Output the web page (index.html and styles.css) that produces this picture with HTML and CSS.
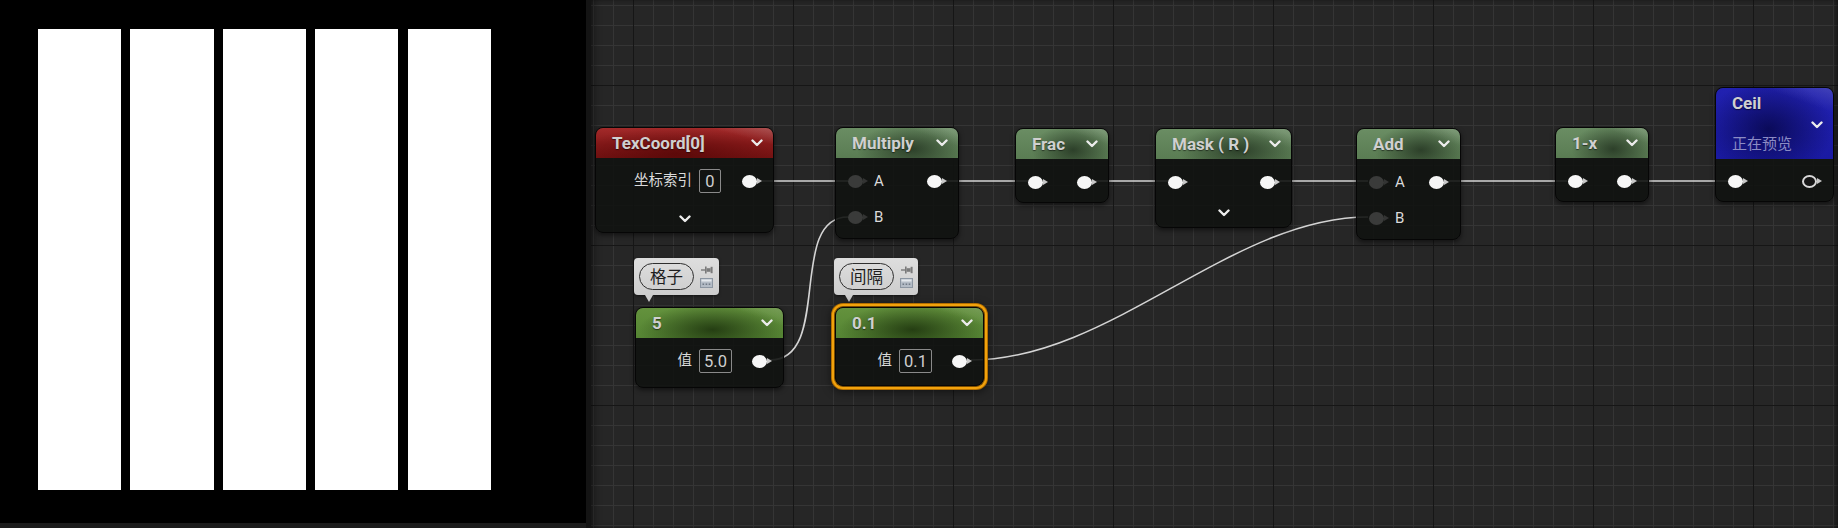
FILE: index.html
```html
<!DOCTYPE html>
<html lang="zh">
<head>
<meta charset="utf-8">
<title>Material Graph</title>
<link rel="stylesheet" href="styles.css">
</head>
<body>
<div class="app">
  <div class="preview-col">
    <div class="preview">
      <div class="stripes">
        <div class="bar"></div><div class="bar"></div><div class="bar"></div><div class="bar"></div><div class="bar"></div>
      </div>
    </div>
    <div class="preview-foot"></div>
  </div>
  <div class="divider"></div>
  <div class="graph">
    <svg class="wires" width="1247" height="528" viewBox="0 0 1247 528">
      <g stroke="#d4d4d4" stroke-width="1.6" fill="none">
        <line x1="168" y1="181" x2="257" y2="181"/>
        <line x1="354" y1="181" x2="438" y2="181"/>
        <line x1="504" y1="181" x2="577" y2="181"/>
        <line x1="689" y1="181" x2="777" y2="181"/>
        <line x1="858" y1="181" x2="976" y2="181"/>
        <line x1="1045" y1="181" x2="1137" y2="181"/>
        <path d="M179 360 C 242 360, 196 217, 257 217"/>
        <path d="M380 360 C 520 360, 640 217, 777 217"/>
      </g>
    </svg>

    <!-- TexCoord -->
    <div class="node n-tex">
      <div class="hdr hdr-red"><span class="title">TexCoord[0]</span><svg class="chev" width="12" height="8" viewBox="0 0 12 8"><polyline points="1.5,1.5 6,6 10.5,1.5"/></svg></div>
      <div class="body">
        <div class="row row-end"><span class="lbl">坐标索引</span><span class="box">0</span><span class="pin out gap-l"></span></div>
        <div class="row-chev tall"><svg class="chev" width="12" height="8" viewBox="0 0 12 8"><polyline points="1.5,1.5 6,6 10.5,1.5"/></svg></div>
      </div>
    </div>

    <!-- Multiply -->
    <div class="node n-mul">
      <div class="hdr hdr-green"><span class="title">Multiply</span><svg class="chev" width="12" height="8" viewBox="0 0 12 8"><polyline points="1.5,1.5 6,6 10.5,1.5"/></svg></div>
      <div class="body pb3">
        <div class="row"><span class="in"><span class="pin dark"></span><span class="lbl">A</span></span><span class="pin out"></span></div>
        <div class="row"><span class="in"><span class="pin dark"></span><span class="lbl">B</span></span></div>
      </div>
    </div>

    <!-- Frac -->
    <div class="node n-frac">
      <div class="hdr hdr-green"><span class="title">Frac</span><svg class="chev" width="12" height="8" viewBox="0 0 12 8"><polyline points="1.5,1.5 6,6 10.5,1.5"/></svg></div>
      <div class="body">
        <div class="row"><span class="pin out"></span><span class="pin out"></span></div>
      </div>
    </div>

    <!-- Mask -->
    <div class="node n-mask">
      <div class="hdr hdr-green"><span class="title">Mask ( R )</span><svg class="chev" width="12" height="8" viewBox="0 0 12 8"><polyline points="1.5,1.5 6,6 10.5,1.5"/></svg></div>
      <div class="body">
        <div class="row"><span class="pin out"></span><span class="pin out"></span></div>
        <div class="row-chev"><svg class="chev" width="12" height="8" viewBox="0 0 12 8"><polyline points="1.5,1.5 6,6 10.5,1.5"/></svg></div>
      </div>
    </div>

    <!-- Add -->
    <div class="node n-add">
      <div class="hdr hdr-green"><span class="title">Add</span><svg class="chev" width="12" height="8" viewBox="0 0 12 8"><polyline points="1.5,1.5 6,6 10.5,1.5"/></svg></div>
      <div class="body pb3">
        <div class="row"><span class="in"><span class="pin dark"></span><span class="lbl">A</span></span><span class="pin out"></span></div>
        <div class="row"><span class="in"><span class="pin dark"></span><span class="lbl">B</span></span></div>
      </div>
    </div>

    <!-- 1-x -->
    <div class="node n-onex">
      <div class="hdr hdr-green"><span class="title">1-x</span><svg class="chev" width="12" height="8" viewBox="0 0 12 8"><polyline points="1.5,1.5 6,6 10.5,1.5"/></svg></div>
      <div class="body">
        <div class="row"><span class="pin out"></span><span class="pin out"></span></div>
      </div>
    </div>

    <!-- Ceil -->
    <div class="node n-ceil">
      <div class="hdr-blue">
        <span class="title">Ceil</span>
        <svg class="chev chev-r" width="12" height="8" viewBox="0 0 12 8"><polyline points="1.5,1.5 6,6 10.5,1.5"/></svg>
        <span class="sub">正在预览</span>
      </div>
      <div class="body pt4">
        <div class="row"><span class="pin out"></span><span class="pin ring"></span></div>
      </div>
    </div>

    <!-- Comments -->
    <div class="comment c-grid">
      <span class="pill">格子</span>
      <span class="cicons">
        <svg width="12" height="8" viewBox="0 0 12 8"><g fill="#7a7a7a"><rect x="0" y="3.3" width="4" height="1.4"/><rect x="4" y="0.5" width="1.6" height="7"/><rect x="5.6" y="2.2" width="4" height="3.6"/><rect x="9.6" y="0.8" width="2" height="6.4"/></g></svg>
        <svg width="13" height="10" viewBox="0 0 13 10"><rect x="0.5" y="0.5" width="12" height="9" fill="#b4bcc6" stroke="#8c96a2"/><rect x="1.5" y="1.5" width="10" height="2" fill="#e4e8ec"/><g fill="#6a7480"><rect x="2.5" y="5.5" width="1.6" height="1.4"/><rect x="5.6" y="5.5" width="1.6" height="1.4"/><rect x="8.7" y="5.5" width="1.6" height="1.4"/></g></svg>
      </span>
    </div>
    <div class="comment c-gap">
      <span class="pill">间隔</span>
      <span class="cicons">
        <svg width="12" height="8" viewBox="0 0 12 8"><g fill="#7a7a7a"><rect x="0" y="3.3" width="4" height="1.4"/><rect x="4" y="0.5" width="1.6" height="7"/><rect x="5.6" y="2.2" width="4" height="3.6"/><rect x="9.6" y="0.8" width="2" height="6.4"/></g></svg>
        <svg width="13" height="10" viewBox="0 0 13 10"><rect x="0.5" y="0.5" width="12" height="9" fill="#b4bcc6" stroke="#8c96a2"/><rect x="1.5" y="1.5" width="10" height="2" fill="#e4e8ec"/><g fill="#6a7480"><rect x="2.5" y="5.5" width="1.6" height="1.4"/><rect x="5.6" y="5.5" width="1.6" height="1.4"/><rect x="8.7" y="5.5" width="1.6" height="1.4"/></g></svg>
      </span>
    </div>

    <!-- Constant 5 -->
    <div class="node n-c5">
      <div class="hdr hdr-const"><span class="title">5</span><svg class="chev" width="12" height="8" viewBox="0 0 12 8"><polyline points="1.5,1.5 6,6 10.5,1.5"/></svg></div>
      <div class="body pb8">
        <div class="row row-end"><span class="lbl">值</span><span class="box">5.0</span><span class="pin out gap-l2"></span></div>
      </div>
    </div>

    <!-- Constant 0.1 (selected) -->
    <div class="node n-c01 selected">
      <div class="hdr hdr-const"><span class="title">0.1</span><svg class="chev" width="12" height="8" viewBox="0 0 12 8"><polyline points="1.5,1.5 6,6 10.5,1.5"/></svg></div>
      <div class="body pb6">
        <div class="row row-end"><span class="lbl">值</span><span class="box">0.1</span><span class="pin out gap-l2"></span></div>
      </div>
    </div>
  </div>
</div>
</body>
</html>
```

FILE: styles.css
```css
* { box-sizing: border-box; }
html, body { margin: 0; padding: 0; }
body {
  width: 1838px;
  height: 528px;
  overflow: hidden;
  background: #1b1b1b;
  font-family: Roboto, "Noto Sans CJK SC", "DejaVu Sans", sans-serif;
}
.app { display: flex; width: 1838px; height: 528px; }

/* ---------- preview ---------- */
.preview-col { width: 586px; display: flex; flex-direction: column; }
.preview { height: 523px; background: #000; padding: 29px 0 0 38px; }
.preview-foot { flex: 1; background: #1c1c1c; }
.stripes { display: grid; grid-template-columns: repeat(5, 83.2px); column-gap: 9.2px; height: 461px; }
.bar { background: #fff; }
.divider { width: 5px; background: #141414; }

/* ---------- graph ---------- */
.graph {
  flex: 1;
  position: relative;
  overflow: hidden;
  background-color: #262626;
  background-image:
    linear-gradient(to right, #161616 0 1.5px, transparent 1.5px),
    linear-gradient(to bottom, #161616 0 1.5px, transparent 1.5px),
    linear-gradient(to right, #353535 0 1px, transparent 1px),
    linear-gradient(to bottom, #353535 0 1px, transparent 1px);
  background-size: 160px 100%, 100% 160px, 20px 100%, 100% 20px;
  background-position: 42px 0, 0 85px, 2px 0, 0 5px;
  box-shadow: inset 6px 0 8px -4px rgba(0,0,0,0.55), inset -4px 0 5px -2px rgba(0,0,0,0.5);
}
.wires { position: absolute; left: 0; top: 0; }

/* ---------- nodes ---------- */
.node {
  position: absolute;
  border: 1px solid #060606;
  border-radius: 8px;
  background: rgba(17, 19, 17, 0.9);
  box-shadow: 0 2px 5px rgba(0,0,0,0.55);
  overflow: hidden;
  color: #dcdcdc;
}
.hdr {
  height: 30px;
  display: flex;
  align-items: center;
  justify-content: space-between;
  padding: 0 10px 0 16px;
}
.title {
  font-size: 17px;
  font-weight: 700;
  color: #d0d0d0;
  text-shadow: 0 1px 1px rgba(0,0,0,0.5);
  line-height: 1;
}
.chev polyline { fill: none; stroke: #ececec; stroke-width: 2.4; stroke-linecap: round; stroke-linejoin: round; }

.hdr-red {
  background:
    linear-gradient(195deg, rgba(190,190,190,0.28) 0%, rgba(190,190,190,0) 22%),
    radial-gradient(ellipse 55% 90% at 45% 85%, rgba(70,0,0,0.55), rgba(70,0,0,0) 100%),
    linear-gradient(180deg, #a32a2a 0%, #851919 55%, #731212 100%);
}
.hdr-green {
  background:
    linear-gradient(200deg, rgba(200,200,200,0.22) 0%, rgba(200,200,200,0) 25%),
    radial-gradient(ellipse 45% 85% at 62% 70%, rgba(28,42,26,0.75), rgba(28,42,26,0) 100%),
    linear-gradient(180deg, #6a8d63 0%, #5a7c53 100%);
}
.hdr-const {
  background:
    linear-gradient(200deg, rgba(200,200,200,0.2) 0%, rgba(200,200,200,0) 22%),
    radial-gradient(ellipse 50% 85% at 52% 72%, rgba(24,44,10,0.8), rgba(24,44,10,0) 100%),
    linear-gradient(180deg, #64923d 0%, #558433 100%);
}
.hdr-blue {
  height: 71px;
  display: grid;
  grid-template-columns: 1fr auto;
  grid-template-rows: 30px 14px 24px;
  padding: 0 10px 0 16px;
  background:
    linear-gradient(200deg, rgba(200,200,220,0.2) 0%, rgba(200,200,220,0) 22%),
    radial-gradient(ellipse 55% 70% at 45% 58%, rgba(6,6,70,0.8), rgba(6,6,70,0) 100%),
    linear-gradient(180deg, #2121b0 0%, #1a1aa2 100%);
}
.hdr-blue .title { align-self: center; grid-column: 1 / 3; }
.hdr-blue .chev-r { grid-column: 2; grid-row: 2; align-self: center; justify-self: end; }
.hdr-blue .sub { grid-column: 1 / 3; grid-row: 3; font-size: 15px; color: #8b8bc4; align-self: center; line-height: 1; }

.body { padding: 5px 0 2px; }
.pt4 { padding-top: 4px; }
.pb3 { padding-bottom: 3px; }
.pb6 { padding-bottom: 6px; }
.pb8 { padding-bottom: 8px; }
.row {
  height: 36px;
  display: flex;
  align-items: center;
  justify-content: space-between;
  padding: 0 12px;
}
.row-end { justify-content: flex-end; }
.row-chev { height: 25px; display: flex; align-items: center; justify-content: center; }
.row-chev.tall { height: 33px; padding-top: 6px; }
.in { display: flex; align-items: center; }
.lbl { font-size: 14.5px; color: #dadada; line-height: 1; }
.in .lbl { font-size: 15px; margin-left: 7px; }
.box {
  border: 1px solid #8a8a8a;
  border-radius: 2px;
  height: 24px;
  padding: 0 4px;
  min-width: 22px;
  display: flex;
  align-items: center;
  justify-content: center;
  font-size: 16.5px;
  color: #cfcfcf;
  margin-left: 7px;
}
.gap-l { margin-left: 21px; }
.gap-l2 { margin-left: 20px; }

/* pins */
.pin {
  position: relative;
  width: 15px;
  height: 13px;
  margin-right: 4px;
  border-radius: 50%;
  background: #f6f6f6;
  flex: none;
}
.pin::after {
  content: "";
  position: absolute;
  right: -5px;
  top: 3.5px;
  border-left: 5px solid #c8c8c8;
  border-top: 3px solid transparent;
  border-bottom: 3px solid transparent;
}
.pin.dark { background: #3a3b3a; }
.pin.dark::after { border-left-color: #333433; }
.pin.ring { background: #151515; border: 2.5px solid #d8d8d8; }
.pin.ring::after { right: -7px; top: 1.5px; }

/* node placement (diagram canvas) */
.n-tex  { left: 4px;    top: 127px; width: 179px; height: 106px; }
.n-mul  { left: 244px;  top: 127px; width: 124px; }
.n-frac { left: 424px;  top: 128px; width: 94px; }
.n-mask { left: 564px;  top: 128px; width: 137px; }
.n-add  { left: 765px;  top: 128px; width: 105px; }
.n-onex { left: 964px;  top: 127px; width: 94px; }
.n-ceil { left: 1124px; top: 87px;  width: 119px; }
.n-c5   { left: 44px;   top: 307px; width: 149px; }
.n-c01  { left: 244px;  top: 307px; width: 149px; }

.selected {
  overflow: visible;
  box-shadow: 0 0 0 1px #7a4c00, 0 0 0 3px #f2a20c, 0 0 0 4px #b36f00, 0 2px 8px 4px rgba(0,0,0,0.5);
}
.selected .hdr { border-radius: 7px 7px 0 0; }

/* comment bubbles */
.comment {
  position: absolute;
  top: 258px;
  height: 37px;
  display: flex;
  align-items: center;
  gap: 6px;
  padding: 0 5px;
  border-radius: 4px;
  background: linear-gradient(180deg, #dedede 0%, #cdcdcd 100%);
  box-shadow: 0 1px 3px rgba(0,0,0,0.5);
}
.comment::after {
  content: "";
  position: absolute;
  left: 11px;
  bottom: -7px;
  border-top: 7px solid #cdcdcd;
  border-left: 4px solid transparent;
  border-right: 4px solid transparent;
}
.c-grid { left: 43px; width: 85px; }
.c-gap  { left: 243px; width: 84px; }
.pill {
  height: 27px;
  padding: 0 10px;
  border: 1.5px solid #2e2e2e;
  border-radius: 14px;
  font-family: "Noto Sans CJK SC", sans-serif;
  font-size: 16.5px;
  line-height: 24px;
  color: #1e1e1e;
}
.cicons { display: flex; flex-direction: column; align-items: center; gap: 4px; }
```
